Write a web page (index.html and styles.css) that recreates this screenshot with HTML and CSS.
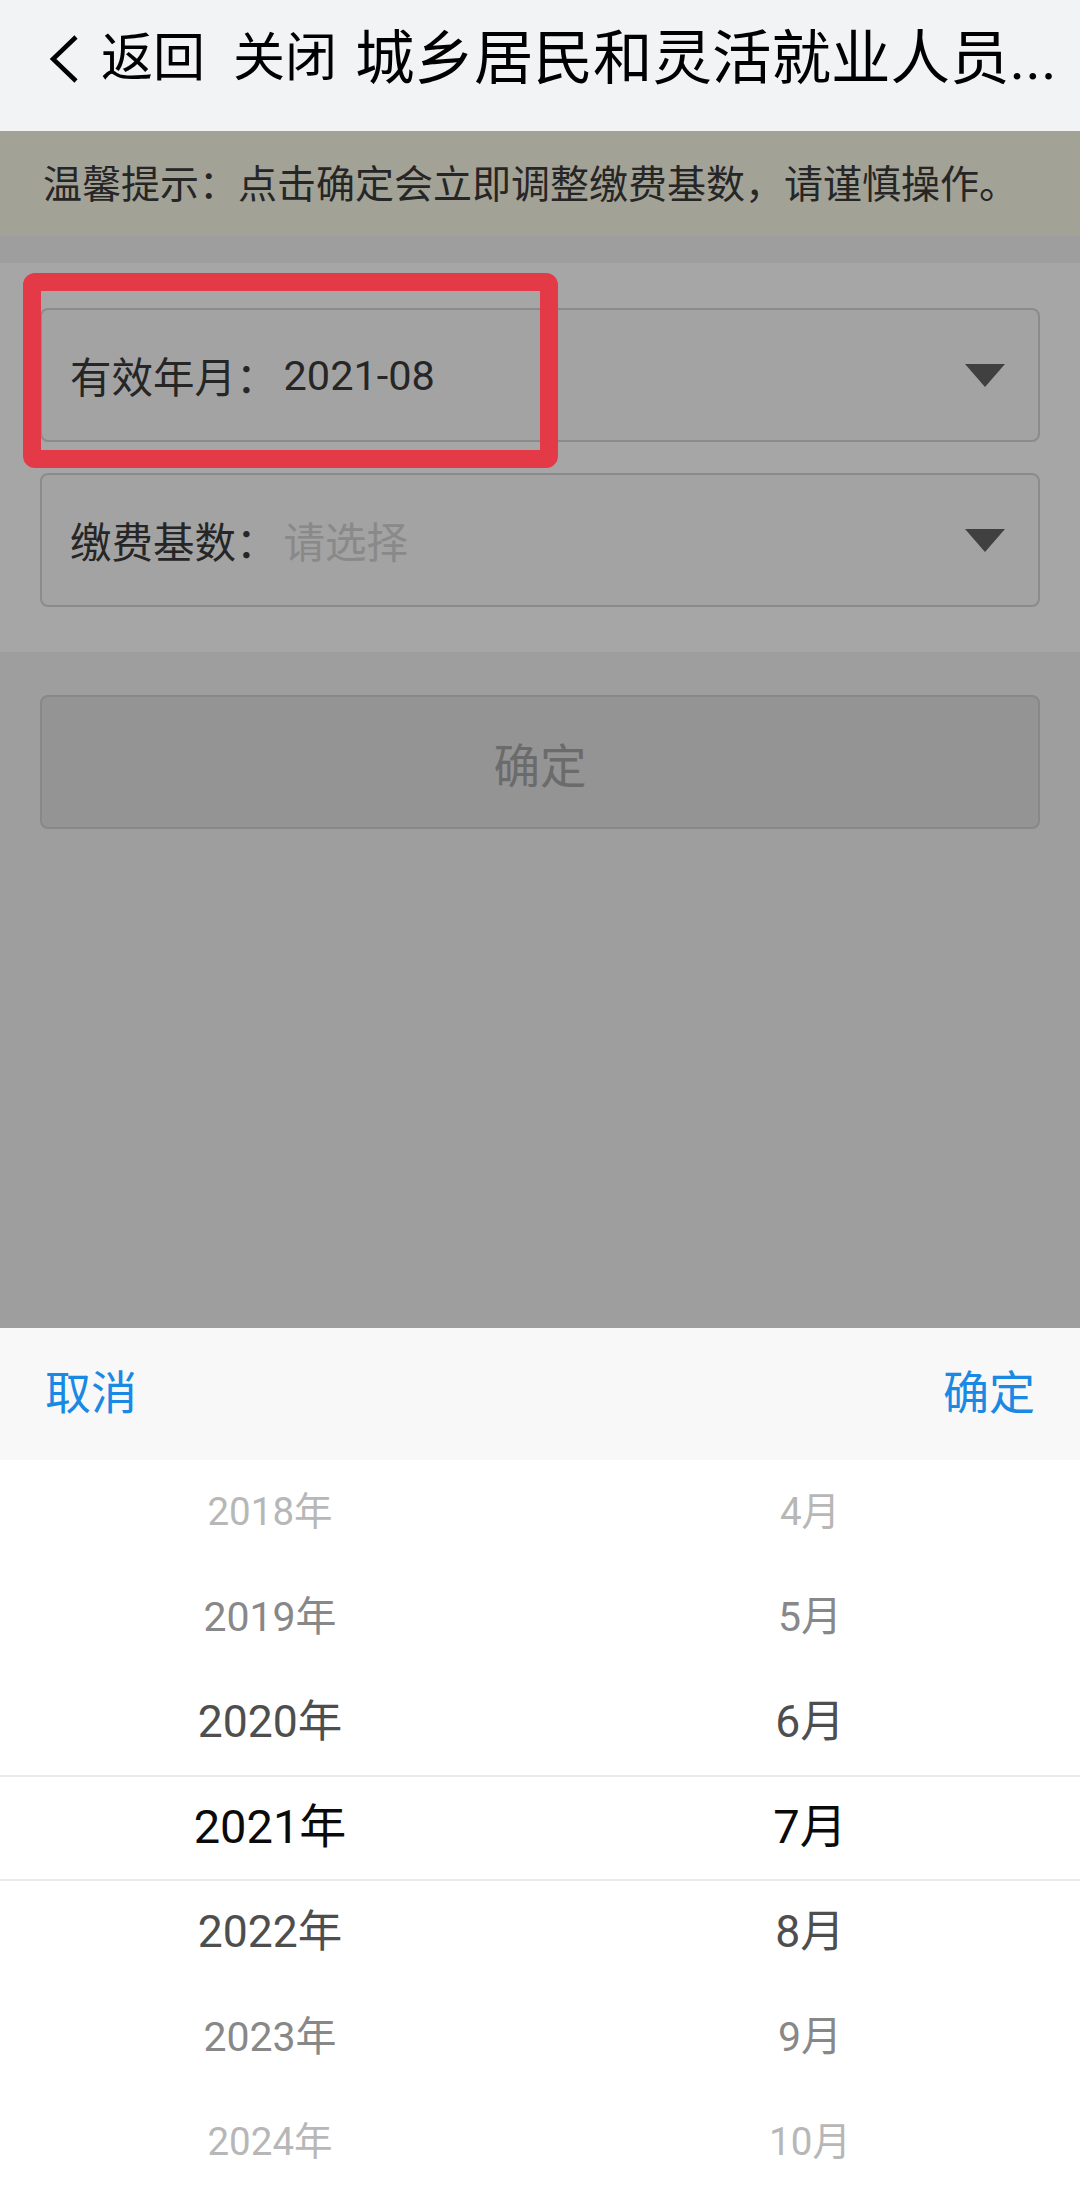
FILE: index.html
```html
<!DOCTYPE html>
<html lang="zh-CN">
<head>
<meta charset="utf-8">
<title>缴费基数调整</title>
<link rel="stylesheet" href="styles.css">
</head>
<body>
<header class="titlebar">
  <span class="back">
    <svg class="chevron" width="30" height="48" viewBox="0 0 30 48"><polyline points="27,2 4,24 27,46" fill="none" stroke="#000" stroke-width="4.5" stroke-linejoin="miter"/></svg>
    返回
  </span>
  <span class="close">关闭</span>
  <h1 class="title">城乡居民和灵活就业人员...</h1>
</header>

<main class="page">
  <div class="tip">温馨提示：点击确定会立即调整缴费基数，请谨慎操作。</div>
  <section class="form">
    <div class="select">
      <span class="label">有效年月：</span><span class="value">2021-08</span>
      <i class="caret"></i>
    </div>
    <div class="select">
      <span class="label">缴费基数：</span><span class="value placeholder">请选择</span>
      <i class="caret"></i>
    </div>
  </section>
  <div class="actions">
    <button class="submit" type="button">确定</button>
  </div>
</main>

<div class="mask"></div>
<div class="mark"></div>

<div class="picker">
  <div class="picker-bar">
    <span class="picker-btn">取消</span>
    <span class="picker-btn">确定</span>
  </div>
  <div class="picker-body">
    <div class="col">
      <div class="row d3">2018年</div>
      <div class="row d2">2019年</div>
      <div class="row d1">2020年</div>
      <div class="row d0">2021年</div>
      <div class="row d1">2022年</div>
      <div class="row d2">2023年</div>
      <div class="row d3">2024年</div>
    </div>
    <div class="col">
      <div class="row d3">4月</div>
      <div class="row d2">5月</div>
      <div class="row d1">6月</div>
      <div class="row d0">7月</div>
      <div class="row d1">8月</div>
      <div class="row d2">9月</div>
      <div class="row d3">10月</div>
    </div>
    <div class="band"></div>
  </div>
</div>
</body>
</html>
```

FILE: styles.css
```css
* { box-sizing: border-box; }

html, body {
  margin: 0;
  padding: 0;
}

body {
  width: 1080px;
  height: 2193px;
  overflow: hidden;
  background: #f3f3f3;
  font-family: Roboto, "Noto Sans CJK SC", sans-serif;
  color: #000;
}

/* ---------- title bar ---------- */
.titlebar {
  display: flex;
  align-items: center;
  height: 131px;
  padding: 0 0 12px 49px;
  background: #f2f3f5;
}

.back {
  display: flex;
  align-items: center;
  font-size: 52px;
  line-height: 1.2;
}

.chevron {
  margin-right: 22px;
}

.close {
  margin-left: 28px;
  font-size: 52px;
  line-height: 1.2;
}

.title {
  flex: 1;
  min-width: 0;
  margin: 0 0 0 18px;
  font-size: 59.5px;
  font-weight: 400;
  line-height: 1.2;
  white-space: nowrap;
}

/* ---------- page ---------- */
.tip {
  display: flex;
  align-items: center;
  height: 105px;
  padding: 0 0 6px 43px;
  margin-bottom: 27px;
  background: #fbf9e7;
  color: #3b3b3b;
  font-size: 39px;
}

.form {
  display: flex;
  flex-direction: column;
  gap: 31px;
  padding: 45px 40px;
  background: #fff;
}

.select {
  display: flex;
  align-items: center;
  height: 134px;
  padding: 0 33px 0 28px;
  border: 2px solid #d6d6d6;
  border-radius: 8px;
  background: #fafafa;
  color: #3b3b3b;
  font-size: 41.5px;
}

.value {
  margin-left: 6px;
}

.placeholder {
  color: #d3d3d3;
}

.caret {
  margin-left: auto;
  width: 0;
  height: 0;
  border-left: 20.5px solid transparent;
  border-right: 20.5px solid transparent;
  border-top: 23px solid #636363;
}

.actions {
  padding: 43px 40px 0;
}

.submit {
  display: block;
  width: 100%;
  height: 134px;
  border: 2px solid #d1d1d1;
  border-radius: 8px;
  background: #e3e3e3;
  color: #a5a5a5;
  font-family: inherit;
  font-size: 46.5px;
  padding: 0;
}

/* ---------- overlay ---------- */
.mask {
  position: fixed;
  top: 131px;
  left: 0;
  right: 0;
  bottom: 865px;
  background: rgba(0, 0, 0, 0.35);
}

.mark {
  position: absolute;
  left: 23px;
  top: 273px;
  width: 535px;
  height: 195px;
  border: 18px solid #e43a47;
  border-radius: 12px;
}

/* ---------- picker ---------- */
.picker {
  position: fixed;
  left: 0;
  right: 0;
  bottom: 0;
  height: 865px;
  background: #fff;
}

.picker-bar {
  display: flex;
  justify-content: space-between;
  align-items: center;
  height: 132px;
  padding: 0 45px;
  background: #f8f8f8;
}

.picker-btn {
  color: #1a89e3;
  font-size: 46px;
  line-height: 1.2;
}

.picker-body {
  position: relative;
  display: flex;
  height: 733px;
  overflow: hidden;
  background: #fff;
}

.col {
  flex: 1;
  display: flex;
  flex-direction: column;
  align-items: center;
}

.row {
  flex-shrink: 0;
  display: flex;
  align-items: center;
  justify-content: center;
  height: 105px;
  line-height: 1.2;
}

.d0 { font-size: 47px; color: #0a0a0a; }
.d1 { font-size: 44.5px; color: #4e4e4e; }
.d2 { font-size: 41px; color: #888; }
.d3 { font-size: 38.5px; color: #b7b7b7; }

.band {
  position: absolute;
  left: 0;
  right: 0;
  top: 315px;
  height: 106px;
  border-top: 2px solid #eaeaea;
  border-bottom: 2px solid #eaeaea;
  pointer-events: none;
}
```
